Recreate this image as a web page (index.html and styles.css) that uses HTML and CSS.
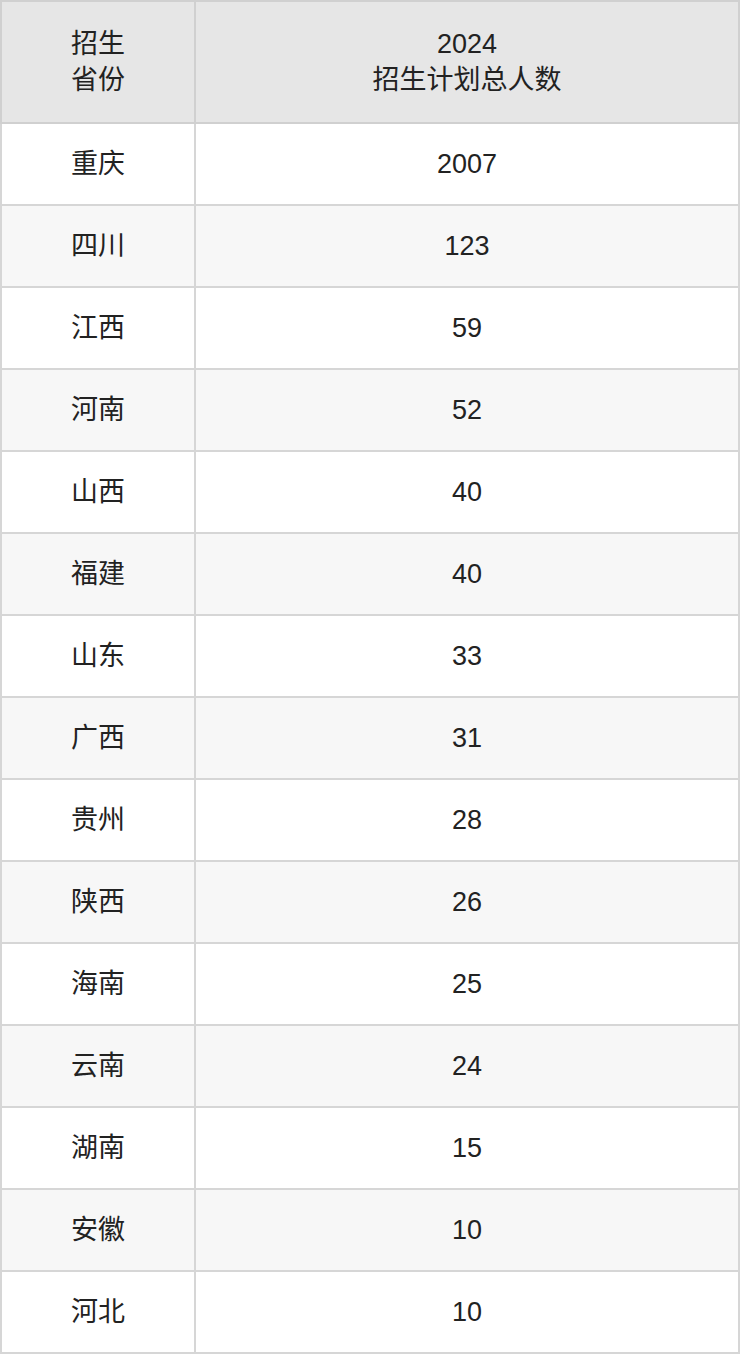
FILE: index.html
```html
<!DOCTYPE html>
<html lang="zh">
<head>
<meta charset="utf-8">
<link rel="stylesheet" href="styles.css">
</head>
<body>
<table class="plan">
  <thead>
    <tr>
      <th class="c1">招生<br>省份</th>
      <th class="c2">2024<br>招生计划总人数</th>
    </tr>
  </thead>
  <tbody>
    <tr><td>重庆</td><td>2007</td></tr>
    <tr><td>四川</td><td>123</td></tr>
    <tr><td>江西</td><td>59</td></tr>
    <tr><td>河南</td><td>52</td></tr>
    <tr><td>山西</td><td>40</td></tr>
    <tr><td>福建</td><td>40</td></tr>
    <tr><td>山东</td><td>33</td></tr>
    <tr><td>广西</td><td>31</td></tr>
    <tr><td>贵州</td><td>28</td></tr>
    <tr><td>陕西</td><td>26</td></tr>
    <tr><td>海南</td><td>25</td></tr>
    <tr><td>云南</td><td>24</td></tr>
    <tr><td>湖南</td><td>15</td></tr>
    <tr><td>安徽</td><td>10</td></tr>
    <tr><td>河北</td><td>10</td></tr>
  </tbody>
</table>
</body>
</html>
```
FILE: styles.css
```css
html, body {
  margin: 0;
  padding: 0;
  background: #ffffff;
}
.plan {
  width: 740px;
  border-collapse: collapse;
  font-family: "Liberation Sans", "Noto Sans CJK SC", sans-serif;
  font-size: 27px;
  color: #222222;
  table-layout: fixed;
}
.plan th, .plan td {
  border: 2px solid #d6d6d6;
  text-align: center;
  vertical-align: middle;
  padding: 0;
  font-weight: normal;
}
.plan th {
  background: #e6e6e6;
  height: 120px;
  line-height: 36px;
  border-color: #d0d0d0;
}
.plan .c1 { width: 192px; }
.plan td {
  height: 80px;
  line-height: 30px;
}
.plan tbody tr:nth-child(even) td {
  background: #f7f7f7;
}
```
